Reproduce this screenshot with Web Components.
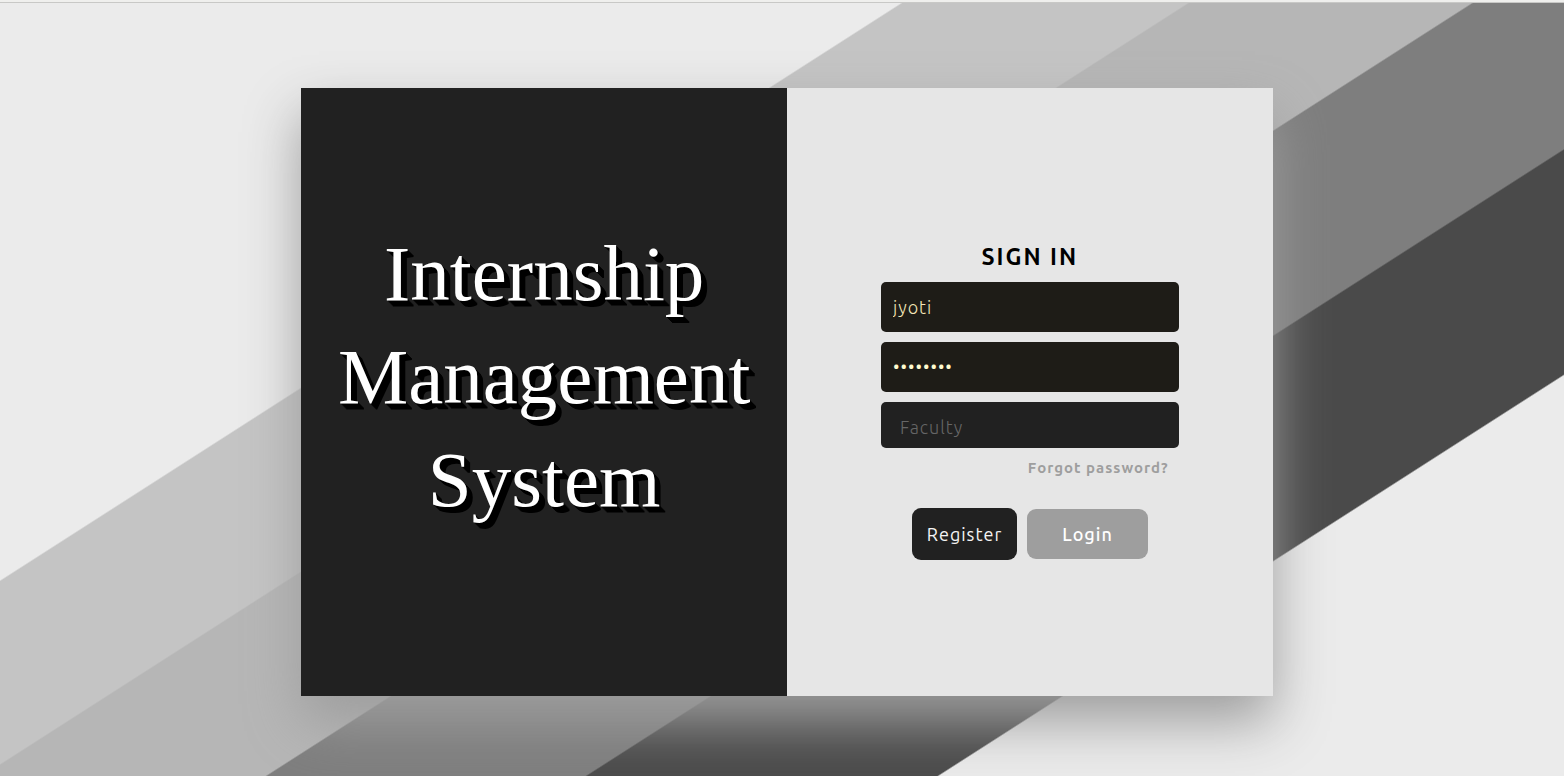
<!DOCTYPE html>
<html lang="en">
<head>
<meta charset="utf-8">
<meta name="viewport" content="width=device-width, initial-scale=1">
<title>Internship Management System</title>
<style>
  body { margin: 0; font-family: Ubuntu, "Noto Sans", sans-serif; --ink: #212121; --paper: #e6e6e6; --mid: #9e9e9e; }
</style>
</head>
<body>
<ims-page>
  <ims-card>
    <ims-title slot="brand">Internship Management System</ims-title>
    <ims-form heading="Sign in"></ims-form>
  </ims-card>
</ims-page>
<script>
  const define = (name, html, setup) => customElements.define(name, class extends HTMLElement {
    constructor() {
      super();
      this.attachShadow({ mode: 'open' }).innerHTML = html;
    }
    connectedCallback() { if (setup) setup(this, this.shadowRoot); }
  });

  define('ims-page', `
    <style>
      :host { display: flex; flex-direction: column; min-height: 100vh; }
      .edge { height: 2px; background: #efefed; border-bottom: 1px solid #c8c8c6; }
      main {
        flex: 1; display: flex; align-items: center; justify-content: center;
        box-sizing: border-box; padding: 5px 0 0 10px;
        background: linear-gradient(147.35deg,
          #ebebeb 32.5%, #c4c4c4 32.6%, #c4c4c4 42.85%, #b6b6b6 42.95%,
          #b6b6b6 53.1%, #7e7e7e 53.2%, #7e7e7e 64.65%, #4a4a4a 64.75%,
          #4a4a4a 77.35%, #ebebeb 77.45%);
      }
      ::slotted(*) { width: 62.5%; }
    </style>
    <div class="edge"></div>
    <main><slot></slot></main>`);

  define('ims-card', `
    <style>
      :host { display: grid; grid-template-columns: 1fr 1fr; aspect-ratio: 8 / 5; box-shadow: 0 26px 52px var(--mid); }
      section { display: flex; align-items: center; justify-content: center; min-width: 0; }
      .brand { background: var(--ink); padding-bottom: 32px; }
      .content { background: var(--paper); padding-top: 18px; }
    </style>
    <section class="brand"><slot name="brand"></slot></section>
    <section class="content"><slot></slot></section>`);

  define('ims-title', `
    <style>
      :host { display: block; }
      h1 {
        margin: 0; padding: 0 24px; text-align: center; color: #fff;
        font: 400 79px/103px "Liberation Serif", serif;
        text-shadow: 1px 1px #000, 2px 2px #000, 3px 3px #000, 4px 4px #000, 5px 5px #000, 6px 6px #000;
      }
    </style>
    <h1><slot></slot></h1>`);

  define('ims-field', `
    <style>
      :host { display: block; }
      input {
        display: block; box-sizing: border-box; width: 100%; height: 50px; padding: 0 12px;
        border: 0; border-radius: 5px; outline: 0; background: #1e1c17; color: #f4e6b8;
        font: 300 18px/24px Ubuntu, "Noto Sans", sans-serif; letter-spacing: 1px;
      }
      input[type="password"] { padding-bottom: 2px; color: #fffbd0; }
    </style>
    <input>`, (host, root) => {
      const input = root.querySelector('input');
      input.type = host.getAttribute('type') || 'text';
      input.value = host.getAttribute('value') || '';
      input.setAttribute('aria-label', host.getAttribute('label'));
    });

  define('ims-role', `
    <style>
      :host { display: block; }
      select {
        appearance: none; display: block; box-sizing: border-box; width: 100%; height: 46px;
        padding: 4px 19px 0; border: 0; border-radius: 5px; background: var(--ink); color: #666;
        font: 300 18px/24px Ubuntu, "Noto Sans", sans-serif; letter-spacing: 1px;
      }
    </style>
    <select aria-label="Role"><option>Faculty</option></select>`);

  define('ims-button', `
    <style>
      :host { display: block; }
      button {
        display: block; box-sizing: border-box; height: 52px; padding: 0 15px; border: 0; border-radius: 9px;
        background: var(--ink); color: #f4f4f4; letter-spacing: 1px;
        font: 400 18px/24px Ubuntu, "Noto Sans", sans-serif;
      }
      :host([primary]) button { height: 50px; padding: 0 35px; background: var(--mid); color: #fff; font-weight: 500; }
    </style>
    <button type="button"><slot></slot></button>`);

  define('ims-form', `
    <style>
      :host { display: block; box-sizing: border-box; width: 100%; padding: 0 94px; }
      form { display: flex; flex-direction: column; gap: 10px; }
      h2 { margin: 0; text-align: center; text-transform: uppercase; color: #000; font-size: 23px; font-weight: 700; line-height: 30px; letter-spacing: 2px; }
      a { align-self: flex-end; margin-right: 10px; color: var(--mid); font-size: 15px; font-weight: 700; line-height: 20px; letter-spacing: 1px; text-decoration: none; }
      .actions { display: flex; justify-content: center; align-items: center; gap: 10px; padding-top: 20px; }
    </style>
    <form>
      <h2></h2>
      <ims-field label="Username" value="jyoti"></ims-field>
      <ims-field label="Password" type="password" value="password"></ims-field>
      <ims-role></ims-role>
      <a href="#">Forgot password?</a>
      <div class="actions">
        <ims-button>Register</ims-button>
        <ims-button primary>Login</ims-button>
      </div>
    </form>`, (host, root) => {
      root.querySelector('h2').textContent = host.getAttribute('heading');
    });
</script>
</body>
</html>
